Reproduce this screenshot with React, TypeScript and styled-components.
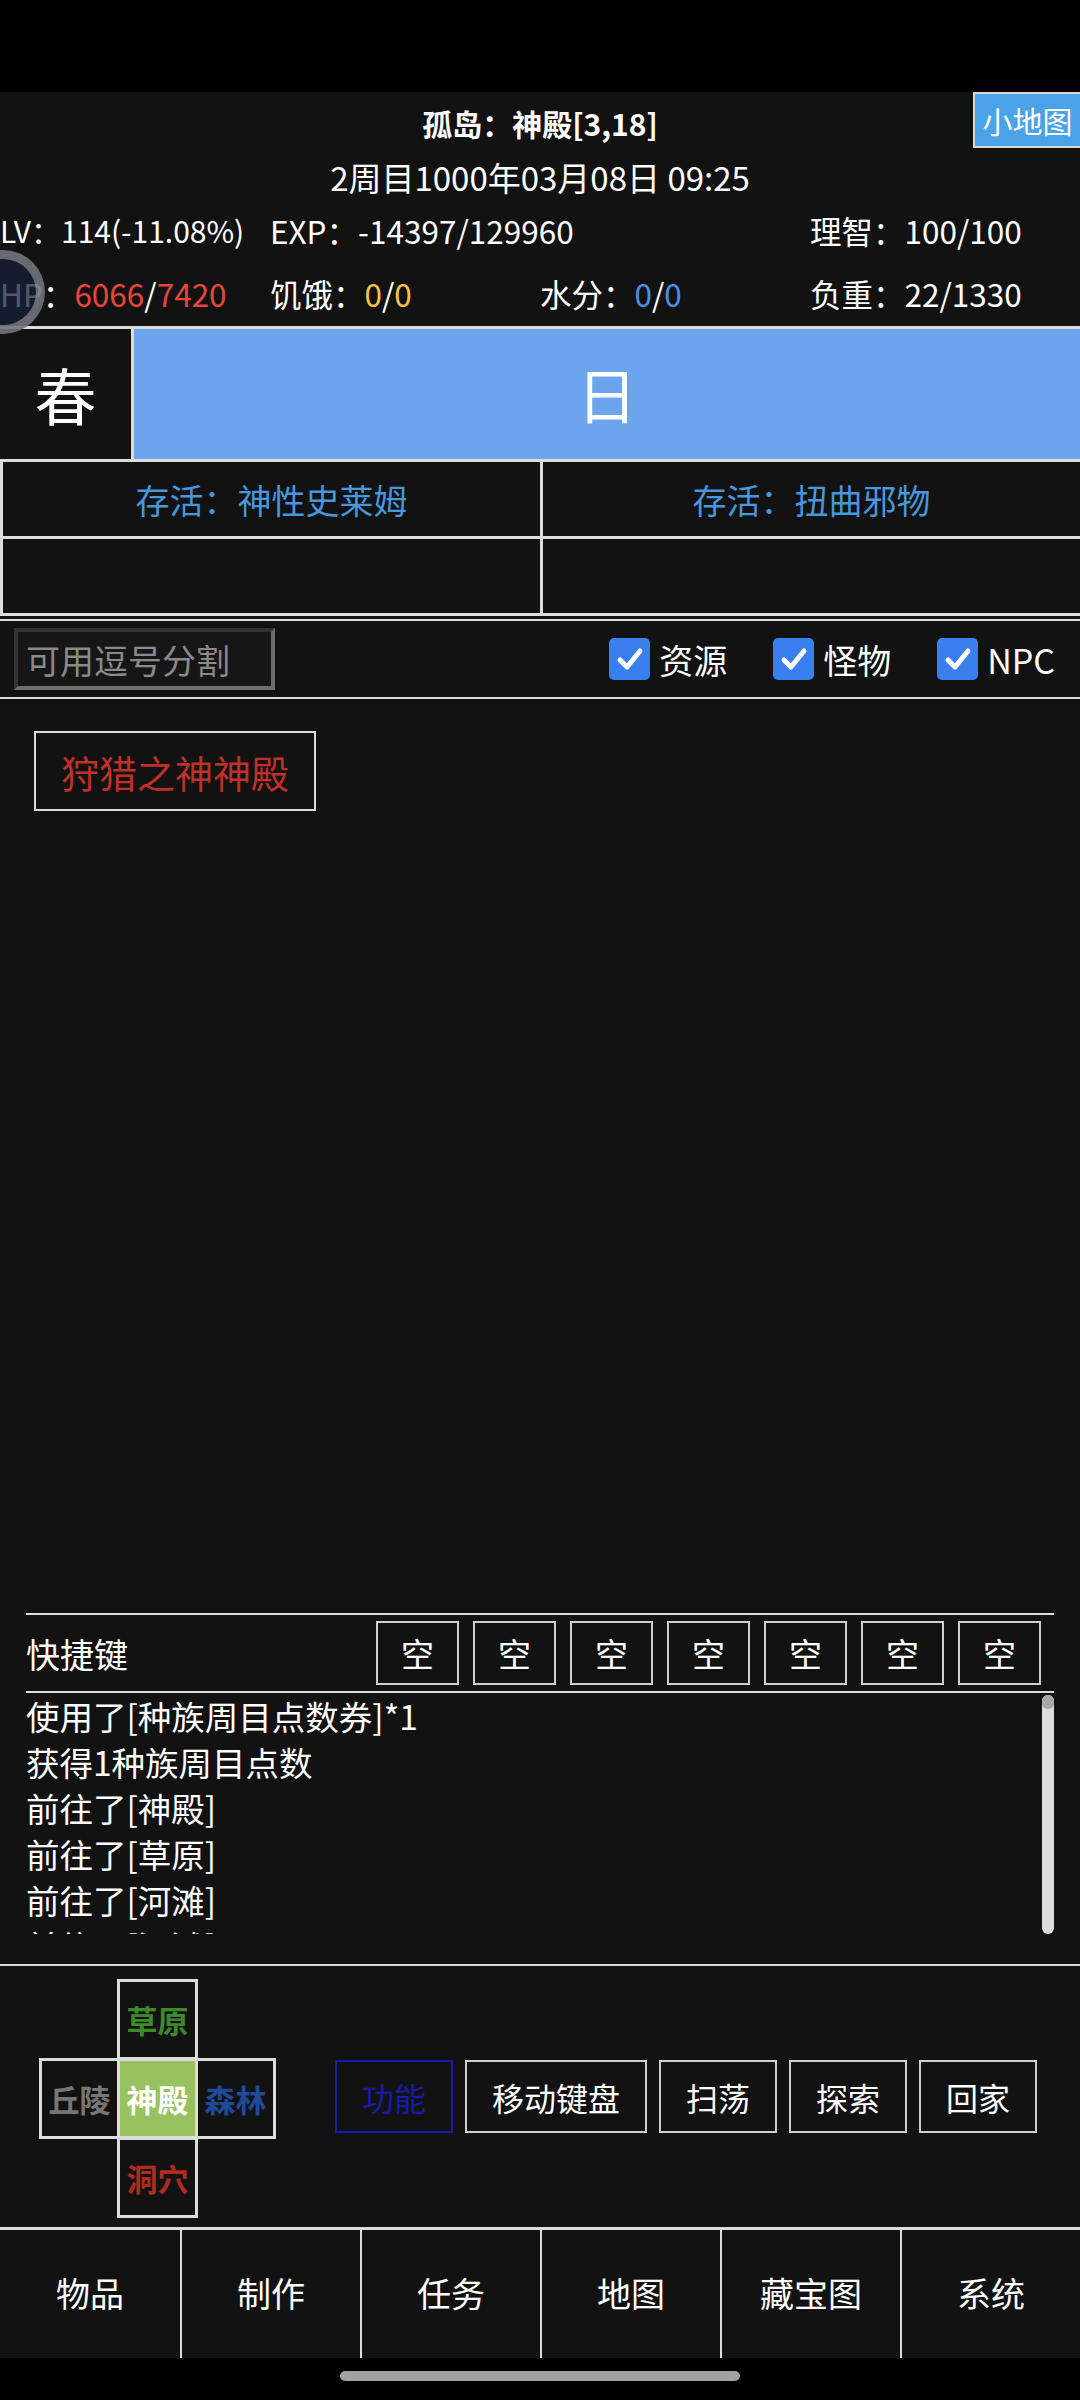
import React from 'react';
import styled, { createGlobalStyle } from 'styled-components';

const GlobalStyle = createGlobalStyle`
  html, body {
    margin: 0;
    padding: 0;
    background: #121212;
  }
  body {
    font-family: "Noto Sans CJK SC", "Noto Sans", sans-serif;
    color: #fff;
  }
`;

const Page = styled.div`
  position: relative;
  width: 1080px;
  height: 2400px;
  display: flex;
  flex-direction: column;
  background: #121212;
  overflow: hidden;
`;

const StatusBar = styled.div`
  height: 92px;
  flex: none;
  background: #000;
`;

const Header = styled.div`
  height: 234px;
  flex: none;
  display: flex;
  flex-direction: column;
`;

const TitleRow = styled.div`
  height: 62px;
  display: grid;
  grid-template-columns: 1fr auto 1fr;
  align-items: center;
`;

const Title = styled.div`
  grid-column: 2;
  font-size: 30px;
  font-weight: 700;
  line-height: 62px;
`;

const MiniMapButton = styled.div`
  grid-column: 3;
  justify-self: end;
  align-self: start;
  width: 107px;
  height: 56px;
  box-sizing: border-box;
  border: 2px solid #d8d8d8;
  border-right: none;
  background: #4aa3e6;
  color: #fff;
  font-size: 30px;
  display: flex;
  align-items: center;
  justify-content: center;
`;

const DateRow = styled.div`
  height: 46px;
  line-height: 46px;
  text-align: center;
  font-size: 33px;
`;

const StatRow = styled.div<{ $h: number }>`
  height: ${p => p.$h}px;
  display: grid;
  grid-template-columns: repeat(4, 270px);
  align-items: center;
  font-size: 31.5px;
  white-space: nowrap;
`;

const Stat = styled.div<{ $span?: number; $small?: boolean }>`
  grid-column: span ${p => p.$span || 1};
  font-size: ${p => (p.$small ? '30px' : 'inherit')};
`;

const Val = styled.span<{ $c: string }>`
  color: ${p => p.$c};
`;

const FloatBall = styled.div`
  position: absolute;
  left: -39px;
  top: 250px;
  width: 84px;
  height: 84px;
  border-radius: 50%;
  box-sizing: border-box;
  border: 9px solid rgba(160, 160, 160, 0.6);
  background: rgba(22, 32, 56, 0.75);
`;

const SeasonRow = styled.div`
  flex: none;
  height: 133px;
  box-sizing: border-box;
  border-top: 3px solid #dcdcdc;
  display: flex;
`;

const SeasonCell = styled.div`
  width: 131px;
  border-right: 3px solid #dcdcdc;
  display: flex;
  align-items: center;
  justify-content: center;
  font-size: 62px;
`;

const DayCell = styled.div`
  flex: 1;
  background: #6ca4ee;
  display: flex;
  align-items: center;
  justify-content: center;
  font-size: 60px;
  padding-bottom: 4px;
`;

const SurviveGrid = styled.div`
  flex: none;
  display: grid;
  grid-template-columns: 1fr 1fr;
  grid-template-rows: 74px 74px;
  gap: 3px;
  padding: 3px 0 3px 3px;
  background: #dcdcdc;
`;

const SurviveCell = styled.div`
  background: #121212;
  color: #4896dc;
  font-size: 34px;
  display: flex;
  align-items: center;
  justify-content: center;
`;

const FilterRow = styled.div`
  flex: none;
  margin-top: 3px;
  height: 80px;
  box-sizing: border-box;
  border-top: 2px solid #dcdcdc;
  border-bottom: 2px solid #dcdcdc;
  display: flex;
  align-items: center;
  padding: 0 25px 0 14px;
`;

const SearchBox = styled.div`
  width: 261px;
  height: 62px;
  box-sizing: border-box;
  border-style: solid;
  border-width: 4px;
  border-color: #333 #6e6e6e #6e6e6e #333;
  background: #161616;
  color: #8a8a8a;
  font-size: 34px;
  display: flex;
  align-items: center;
  padding-left: 8px;
  white-space: nowrap;
`;

const Checks = styled.div`
  margin-left: auto;
  display: flex;
  align-items: center;
  gap: 46px;
`;

const CheckItem = styled.label`
  display: flex;
  align-items: center;
  gap: 9px;
  font-size: 34px;
`;

const CheckBox = styled.span`
  width: 41px;
  height: 42px;
  border-radius: 5px;
  background: #3a7fee;
  display: flex;
  align-items: center;
  justify-content: center;
`;

const MainArea = styled.div`
  flex: 1;
  padding: 32px 34px;
  display: flex;
  align-items: flex-start;
`;

const PlaceButton = styled.div`
  height: 80px;
  box-sizing: border-box;
  border: 2px solid #dcdcdc;
  padding: 0 25px;
  display: flex;
  align-items: center;
  color: #c0302a;
  font-size: 38px;
`;

const QuickSection = styled.div`
  flex: none;
  margin: 0 26px;
`;

const Rule = styled.div`
  height: 2px;
  background: #dcdcdc;
`;

const QuickRow = styled.div`
  height: 76px;
  display: flex;
  align-items: center;
  padding-right: 13px;
  font-size: 34px;
`;

const QuickKeys = styled.div`
  margin-left: auto;
  display: flex;
  gap: 14px;
`;

const QuickKey = styled.div`
  width: 83px;
  height: 64px;
  box-sizing: border-box;
  border: 2px solid #cfcfcf;
  display: flex;
  align-items: center;
  justify-content: center;
  font-size: 33px;
`;

const LogBox = styled.div`
  height: 241px;
  display: flex;
  overflow: hidden;
`;

const LogLines = styled.div`
  flex: 1;
  font-size: 33.5px;
  line-height: 46px;
  white-space: nowrap;
`;

const ScrollTrack = styled.div`
  width: 12px;
  margin: 2px 0 0;
  border-radius: 6px;
  background: #dcdcdc;
`;

const ScrollThumb = styled.div`
  height: 14px;
  border-radius: 6px;
  background: #a8a8a8;
`;

const FullRule = styled.div`
  flex: none;
  margin-top: 30px;
  height: 2px;
  background: #dcdcdc;
`;

const Controls = styled.div`
  flex: none;
  height: 261px;
  box-sizing: border-box;
  padding: 13px 0 0 39px;
  display: flex;
  align-items: flex-start;
`;

const Cross = styled.div`
  display: grid;
  grid-template-columns: repeat(3, 78px);
  grid-template-rows: repeat(3, 79px);
  width: 237px;
`;

const CrossCell = styled.div<{ $col: number; $row: number; $color: string; $bg?: string }>`
  grid-column: ${p => p.$col};
  grid-row: ${p => p.$row};
  width: 81px;
  height: 81px;
  box-sizing: border-box;
  border: 3px solid #dcdcdc;
  background: ${p => p.$bg || '#121212'};
  color: ${p => p.$color};
  font-size: 31px;
  font-weight: 700;
  display: flex;
  align-items: center;
  justify-content: center;
  white-space: nowrap;
`;

const Actions = styled.div`
  margin-left: 59px;
  margin-top: 81px;
  display: flex;
  gap: 12px;
`;

const ActionButton = styled.div<{ $accent?: boolean }>`
  height: 73px;
  box-sizing: border-box;
  border: 2px solid ${p => (p.$accent ? '#1a1ab0' : '#cfcfcf')};
  color: ${p => (p.$accent ? '#1a1aa8' : '#fff')};
  padding: 0 25px;
  font-size: 32px;
  display: flex;
  align-items: center;
`;

const Tabs = styled.div`
  flex: none;
  height: 131px;
  box-sizing: border-box;
  border-top: 3px solid #dcdcdc;
  display: grid;
  grid-template-columns: repeat(6, 1fr);
`;

const Tab = styled.div`
  display: flex;
  align-items: center;
  justify-content: center;
  font-size: 34px;
  padding-bottom: 4px;
  & + & {
    border-left: 2px solid #dcdcdc;
  }
`;

const SystemBar = styled.div`
  flex: none;
  height: 42px;
  background: #000;
  display: flex;
  justify-content: center;
  padding-top: 13px;
  box-sizing: border-box;
`;

const HomePill = styled.div`
  width: 400px;
  height: 10px;
  border-radius: 5px;
  background: #a2a2a2;
`;

const Check = () => (
  <svg width="30" height="30" viewBox="0 0 30 30">
    <path d="M5 16 L12 23 L25 7" fill="none" stroke="#fff" strokeWidth="5" strokeLinecap="round" strokeLinejoin="round" />
  </svg>
);

const logs = ['使用了[种族周目点数券]*1', '获得1种族周目点数', '前往了[神殿]', '前往了[草原]', '前往了[河滩]', '前往了[河滩]'];
const tabs = ['物品', '制作', '任务', '地图', '藏宝图', '系统'];

export default function App() {
  return (
    <Page>
      <GlobalStyle />
      <StatusBar />
      <Header>
        <TitleRow>
          <Title>孤岛：神殿[3,18]</Title>
          <MiniMapButton>小地图</MiniMapButton>
        </TitleRow>
        <DateRow>2周目1000年03月08日 09:25</DateRow>
        <StatRow $h={60}>
          <Stat $small>LV：114(-11.08%)</Stat>
          <Stat $span={2}>EXP：-14397/129960</Stat>
          <Stat>理智：100/100</Stat>
        </StatRow>
        <StatRow $h={66}>
          <Stat>
            HP：<Val $c="#e8453c">6066</Val>/<Val $c="#e8453c">7420</Val>
          </Stat>
          <Stat>
            饥饿：<Val $c="#f2c14e">0</Val>/<Val $c="#f2c14e">0</Val>
          </Stat>
          <Stat>
            水分：<Val $c="#4a90e2">0</Val>/<Val $c="#4a90e2">0</Val>
          </Stat>
          <Stat>负重：22/1330</Stat>
        </StatRow>
      </Header>
      <SeasonRow>
        <SeasonCell>春</SeasonCell>
        <DayCell>日</DayCell>
      </SeasonRow>
      <SurviveGrid>
        <SurviveCell>存活：神性史莱姆</SurviveCell>
        <SurviveCell>存活：扭曲邪物</SurviveCell>
        <SurviveCell />
        <SurviveCell />
      </SurviveGrid>
      <FilterRow>
        <SearchBox>可用逗号分割</SearchBox>
        <Checks>
          <CheckItem><CheckBox><Check /></CheckBox>资源</CheckItem>
          <CheckItem><CheckBox><Check /></CheckBox>怪物</CheckItem>
          <CheckItem><CheckBox><Check /></CheckBox>NPC</CheckItem>
        </Checks>
      </FilterRow>
      <MainArea>
        <PlaceButton>狩猎之神神殿</PlaceButton>
      </MainArea>
      <QuickSection>
        <Rule />
        <QuickRow>
          快捷键
          <QuickKeys>
            {Array.from({ length: 7 }).map((_, i) => (
              <QuickKey key={i}>空</QuickKey>
            ))}
          </QuickKeys>
        </QuickRow>
        <Rule />
        <LogBox>
          <LogLines>
            {logs.map((l, i) => (
              <div key={i}>{l}</div>
            ))}
          </LogLines>
          <ScrollTrack>
            <ScrollThumb />
          </ScrollTrack>
        </LogBox>
      </QuickSection>
      <FullRule />
      <Controls>
        <Cross>
          <CrossCell $col={2} $row={1} $color="#3d8a2a">草原</CrossCell>
          <CrossCell $col={1} $row={2} $color="#767676">丘陵</CrossCell>
          <CrossCell $col={2} $row={2} $color="#fff" $bg="#98c160">神殿</CrossCell>
          <CrossCell $col={3} $row={2} $color="#1f4a9a">森林</CrossCell>
          <CrossCell $col={2} $row={3} $color="#b02a20">洞穴</CrossCell>
        </Cross>
        <Actions>
          <ActionButton $accent>功能</ActionButton>
          <ActionButton>移动键盘</ActionButton>
          <ActionButton>扫荡</ActionButton>
          <ActionButton>探索</ActionButton>
          <ActionButton>回家</ActionButton>
        </Actions>
      </Controls>
      <Tabs>
        {tabs.map(t => (
          <Tab key={t}>{t}</Tab>
        ))}
      </Tabs>
      <SystemBar>
        <HomePill />
      </SystemBar>
      <FloatBall />
    </Page>
  );
}
